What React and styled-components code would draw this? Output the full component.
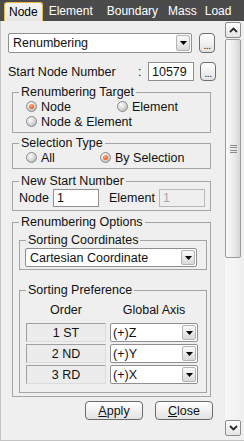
import React from "react";
import styled, { createGlobalStyle } from "styled-components";

const GlobalStyle = createGlobalStyle`
  html, body {
    margin: 0;
    padding: 0;
    background: #efefef;
  }
  body {
    font-family: "Liberation Sans", Arial, sans-serif;
    font-size: 12.5px;
    color: #111;
  }
`;

const Frame = styled.div`
  width: 244px;
  height: 441px;
  display: flex;
  flex-direction: column;
  overflow: hidden;
  background: #efefef;
`;

const TabBar = styled.div`
  height: 21px;
  flex: none;
  background: #4b4b4b;
  display: flex;
  align-items: flex-end;
  padding-left: 4px;
`;

const Tab = styled.div`
  height: ${(p) => (p.$active ? "19px" : "21px")};
  box-sizing: border-box;
  padding: 0 ${(p) => (p.$active ? 4 : 0)}px 0 ${(p) => (p.$active ? 4 : p.$pl)}px;
  display: flex;
  align-items: center;
  color: ${(p) => (p.$active ? "#000" : "#fff")};
  background: ${(p) => (p.$active ? "linear-gradient(#f4f4f4, #e6e6e6)" : "transparent")};
  border: ${(p) => (p.$active ? "1px solid #e8b84a" : "none")};
  border-bottom: none;
  border-radius: 3px 3px 0 0;
  font-size: 12px;
  line-height: 1;
`;

const Body = styled.div`
  flex: 1;
  display: flex;
  border-left: 1px solid #c4c4c4;
  border-bottom: 1px solid #c4c4c4;
`;

const Content = styled.div`
  width: 215px;
  padding: 12px 0 0 7px;
  display: flex;
  flex-direction: column;
`;

const Row = styled.div`
  display: flex;
  align-items: center;
  gap: ${(p) => p.$gap || 0}px;
  margin-top: ${(p) => p.$mt || 0}px;
  margin-left: ${(p) => p.$ml || 0}px;
  height: ${(p) => p.$h || 20}px;
`;

const Combo = styled.div`
  width: ${(p) => p.$w}px;
  height: ${(p) => p.$h || 20}px;
  box-sizing: border-box;
  border: 1px solid #8f8f8f;
  border-radius: 2px;
  background: #fff;
  display: flex;
  align-items: stretch;
  padding: 1px;
`;

const ComboText = styled.div`
  flex: 1;
  display: flex;
  align-items: center;
  padding-left: ${(p) => p.$pl || 3}px;
`;

const DropBtn = styled.div`
  width: 14px;
  box-sizing: border-box;
  border: 1px solid #b4b4b4;
  border-radius: 2px;
  background: linear-gradient(#fafafa, #d9d9d9);
  display: flex;
  align-items: center;
  justify-content: center;
`;

const Arrow = () => (
  <svg width="7" height="4" viewBox="0 0 7 4">
    <path d="M0 0H7L3.5 4Z" fill="#000" />
  </svg>
);

const DotsBtn = styled.div`
  width: 16px;
  height: ${(p) => p.$h || 20}px;
  margin-left: ${(p) => p.$ml || 0}px;
  box-sizing: border-box;
  border: 1px solid #6f6f6f;
  border-radius: 4px;
  background: linear-gradient(#ffffff, #e2e2e2);
  display: flex;
  align-items: flex-end;
  justify-content: center;
  font-size: 10px;
  line-height: 13px;
  letter-spacing: -0.5px;
`;

const Label = styled.div`
  width: ${(p) => p.$w}px;
  margin-left: ${(p) => p.$ml || 0}px;
  display: flex;
  align-items: center;
`;

const Colon = styled.span`
  margin-left: auto;
  width: 10px;
`;

const Field = styled.div`
  width: ${(p) => p.$w}px;
  height: ${(p) => p.$h || 19}px;
  box-sizing: border-box;
  border: 1px solid ${(p) => (p.$disabled ? "#b8b8b8" : "#8f8f8f")};
  background: ${(p) => (p.$disabled ? "#efefef" : "#fff")};
  color: ${(p) => (p.$disabled ? "#a8a8a8" : "#111")};
  display: flex;
  align-items: center;
  padding-left: 3px;
`;

const Group = styled.fieldset`
  margin: ${(p) => p.$mt || 0}px 0 0 ${(p) => p.$ml || 0}px;
  width: ${(p) => p.$w}px;
  box-sizing: border-box;
  padding: 0 0 ${(p) => p.$pb || 2}px 0;
  border: 1px solid #a4a4a4;
  min-width: 0;
`;

const Legend = styled.legend`
  margin-left: 6px;
  padding: 0 2px;
  height: 14px;
  line-height: 14px;
`;

const RadioGrid = styled.div`
  display: grid;
  grid-template-columns: ${(p) => p.$cols};
  grid-auto-rows: 15px;
  margin-left: 13px;
`;

const RadioItem = styled.div`
  display: flex;
  align-items: center;
  gap: 4px;
  white-space: nowrap;
  grid-column: ${(p) => (p.$wide ? "1 / -1" : "auto")};
`;

const RadioDot = styled.span`
  width: 11px;
  height: 11px;
  flex: none;
  box-sizing: border-box;
  border-radius: 50%;
  border: 1px solid #8a8a8a;
  background: radial-gradient(circle at 35% 30%, #ffffff, #d4d4d4 55%, #a8a8a8);
  display: flex;
  align-items: center;
  justify-content: center;
  &::after {
    content: "";
    display: ${(p) => (p.$checked ? "block" : "none")};
    width: 5px;
    height: 5px;
    border-radius: 50%;
    background: radial-gradient(circle at 40% 35%, #ffb080, #f05a1a 70%);
  }
`;

const Radio = ({ checked, wide, children }) => (
  <RadioItem $wide={wide}>
    <RadioDot $checked={checked} />
    {children}
  </RadioItem>
);

const PrefHead = styled.div`
  display: grid;
  grid-template-columns: 80px 88px;
  column-gap: 4px;
  margin: 6px 0 0 6px;
  height: 14px;
  line-height: 14px;
  text-align: center;
`;

const PrefRows = styled.div`
  display: grid;
  grid-template-columns: 80px 88px;
  column-gap: 4px;
  row-gap: 2px;
  grid-auto-rows: 19px;
  margin: 6px 0 0 6px;
`;

const OrderCell = styled.div`
  box-sizing: border-box;
  border-top: 1px solid #a0a0a0;
  border-left: 1px solid #a0a0a0;
  border-right: 1px solid #dcdcdc;
  border-bottom: 1px solid #dcdcdc;
  background: #ececec;
  display: flex;
  align-items: center;
  justify-content: center;
`;

const ButtonRow = styled.div`
  display: flex;
  gap: 12px;
  margin: 4px 0 0 77px;
`;

const PushBtn = styled.div`
  width: 58px;
  height: 19px;
  box-sizing: border-box;
  border: 1px solid #6a6a6a;
  border-radius: 4px;
  background: linear-gradient(#ffffff, #e3e3e3);
  display: flex;
  align-items: center;
  justify-content: center;
  u {
    text-decoration: underline;
  }
`;

const ScrollBar = styled.div`
  width: 16px;
  margin: 1px 0 4px 2px;
  display: flex;
  flex-direction: column;
`;

const ScrollBtn = styled.div`
  height: 16px;
  box-sizing: border-box;
  border: 1px solid #8c8c8c;
  border-radius: 2px;
  background: linear-gradient(#ffffff, #e4e4e4);
  display: flex;
  align-items: center;
  justify-content: center;
`;

const Thumb = styled.div`
  height: 219px;
  margin-top: 1px;
  box-sizing: border-box;
  border: 1px solid #9c9c9c;
  border-radius: 2px;
  background: linear-gradient(90deg, #fbfbfb, #e9e9e9 60%, #d6d6d6);
  display: flex;
  align-items: center;
  justify-content: center;
`;

const Grip = styled.div`
  width: 7px;
  height: 8px;
  background: repeating-linear-gradient(#8c8c8c 0 1px, transparent 1px 2.33px);
`;

const Track = styled.div`
  flex: 1;
  background: linear-gradient(90deg, #f7f7f7, #f1f1f1);
`;

const Chevron = ({ up }) => (
  <svg width="9" height="6" viewBox="0 0 9 6">
    <path
      d={up ? "M1 5L4.5 1.5L8 5" : "M1 1L4.5 4.5L8 1"}
      fill="none"
      stroke="#2a2a2a"
      strokeWidth="1.8"
    />
  </svg>
);

const prefs = [
  ["1 ST", "(+)Z"],
  ["2 ND", "(+)Y"],
  ["3 RD", "(+)X"],
];

const Panel = () => (
  <Content>
    <Row $gap={7}>
      <Combo $w={184}>
        <ComboText>Renumbering</ComboText>
        <DropBtn>
          <Arrow />
        </DropBtn>
      </Combo>
      <DotsBtn>...</DotsBtn>
    </Row>

    <Row $mt={9} $h={19}>
      <Label $w={140}>
        Start Node Number<Colon>:</Colon>
      </Label>
      <Field $w={46}>10579</Field>
      <DotsBtn $h={19} $ml={6}>...</DotsBtn>
    </Row>

    <Group $mt={4} $ml={4} $w={199} $pb={3}>
      <Legend>Renumbering Target</Legend>
      <RadioGrid $cols="91px auto">
        <Radio checked>Node</Radio>
        <Radio>Element</Radio>
        <Radio wide>Node &amp; Element</Radio>
      </RadioGrid>
    </Group>

    <Group $mt={3} $ml={4} $w={199} $pb={3}>
      <Legend>Selection Type</Legend>
      <RadioGrid $cols="74px auto">
        <Radio>All</Radio>
        <Radio checked>By Selection</Radio>
      </RadioGrid>
    </Group>

    <Group $mt={5} $ml={4} $w={199} $pb={3}>
      <Legend>New Start Number</Legend>
      <Row $mt={1} $ml={6} $h={18}>
        <Label $w={34}>Node</Label>
        <Field $w={46} $h={18}>1</Field>
        <Label $w={50} $ml={10}>Element</Label>
        <Field $w={46} $h={18} $disabled>1</Field>
      </Row>
    </Group>

    <Group $mt={4} $ml={4} $w={199} $pb={3}>
      <Legend>Renumbering Options</Legend>
      <Group $mt={4} $ml={6} $w={188} $pb={2}>
        <Legend>Sorting Coordinates</Legend>
        <Row $mt={1} $ml={5} $h={19}>
          <Combo $w={172} $h={19}>
            <ComboText>Cartesian Coordinate</ComboText>
            <DropBtn>
              <Arrow />
            </DropBtn>
          </Combo>
        </Row>
      </Group>

      <Group $mt={13} $ml={6} $w={188} $pb={8}>
        <Legend>Sorting Preference</Legend>
        <PrefHead>
          <span>Order</span>
          <span>Global Axis</span>
        </PrefHead>
        <PrefRows>
          {prefs.map(([order, axis]) => (
            <React.Fragment key={order}>
              <OrderCell>{order}</OrderCell>
              <Combo $w={88} $h={19}>
                <ComboText $pl={1}>{axis}</ComboText>
                <DropBtn>
                  <Arrow />
                </DropBtn>
              </Combo>
            </React.Fragment>
          ))}
        </PrefRows>
      </Group>
    </Group>

    <ButtonRow>
      <PushBtn>
        <u>A</u>pply
      </PushBtn>
      <PushBtn>
        <u>C</u>lose
      </PushBtn>
    </ButtonRow>
  </Content>
);

export default function App() {
  return (
    <>
      <GlobalStyle />
      <Frame>
        <TabBar>
          <Tab $active>Node</Tab>
          <Tab $pl={6}>Element</Tab>
          <Tab $pl={14}>Boundary</Tab>
          <Tab $pl={10}>Mass</Tab>
          <Tab $pl={8}>Load</Tab>
        </TabBar>
        <Body>
          <Panel />
          <ScrollBar>
            <ScrollBtn>
              <Chevron up />
            </ScrollBtn>
            <Thumb>
              <Grip />
            </Thumb>
            <Track />
            <ScrollBtn>
              <Chevron />
            </ScrollBtn>
          </ScrollBar>
        </Body>
      </Frame>
    </>
  );
}
